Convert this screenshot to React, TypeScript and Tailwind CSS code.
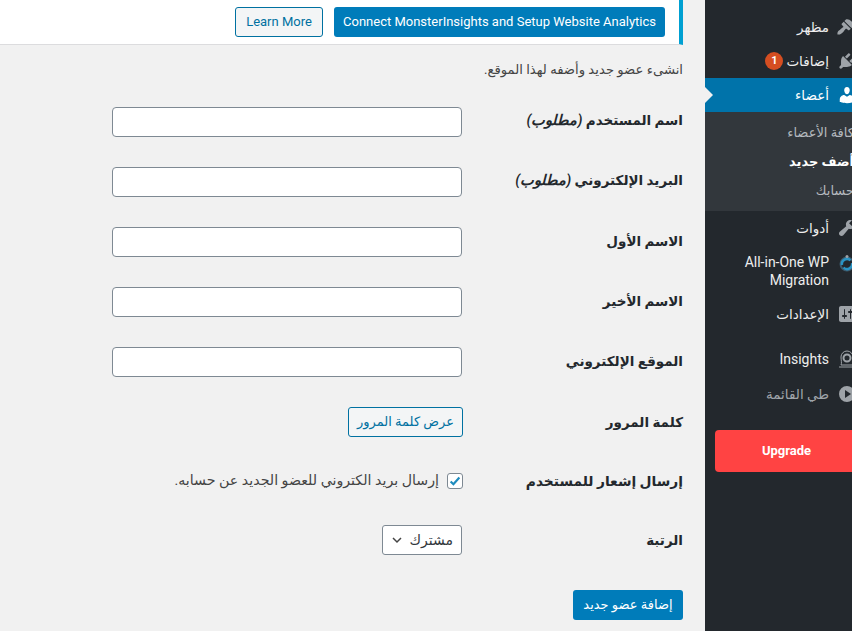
const FONT = "font-['Roboto','Noto_Sans','DejaVu_Sans',sans-serif]";

const Field = ({ label, req }: { label: string; req?: boolean }) => (
  <div className="flex h-[60px] items-center">
    <label className="w-[221px] pb-[2px] text-[13.5px] font-semibold text-[#23282d]">
      {label} {req && <em className="text-[14.5px] font-semibold">(مطلوب)</em>}
    </label>
    <input className="h-[30px] w-[350px] rounded border border-[#7e8993] bg-white" />
  </div>
);

const MenuIcon = ({ d, color }: { d: string; color?: string }) => (
  <svg viewBox="0 0 20 20" className={"h-5 w-5 shrink-0 " + (color || "fill-[#9ea3a8]")}>
    <path fillRule="evenodd" d={d} />
  </svg>
);

const Item = ({ label, icon, cls, children }: { label: string; icon: React.ReactNode; cls?: string; children?: React.ReactNode }) => (
  <div className={"flex items-center " + (cls || "h-[34px] text-[#eeeeee]")}>
    <div className="flex w-[36px] shrink-0 justify-center">{icon}</div>
    <span className="text-[13.5px] leading-[18px]">{label}</span>
    {children}
  </div>
);

const App = () => {
  return (
    <div dir="rtl" className={"flex h-[631px] w-[852px] overflow-hidden bg-[#f1f1f1] " + FONT}>
      <aside className="h-full w-[147px] shrink-0 overflow-hidden bg-[#23282d]">
        <div className="-mr-[13px] w-[160px] pt-[10px]">
          <Item label="مظهر" icon={<MenuIcon d="M14.48 11.06L7.41 3.99l1.5-1.5c.5-.56 2.3-.47 3.51.32 1.21.8 1.43 1.28 2.91 2.1 1.18.64 2.45 1.26 4.45.85zm-.71.71L6.7 4.7 4.93 6.47c-.39.39-.39 1.02 0 1.41l1.06 1.06c.39.39.39 1.03 0 1.42-.6.6-1.43 1.11-2.21 1.69-.35.26-.7.53-1.01.84C1.43 13.23 0 15 .5 17.5c2.5.5 4.27-.93 5.49-2.27.31-.31.58-.66.84-1.01.58-.78 1.09-1.61 1.69-2.21.39-.39 1.03-.39 1.42 0l1.06 1.06c.39.39 1.02.39 1.41 0z" />} />
          <Item label="إضافات" icon={<MenuIcon d="M13.11 4.36L9.87 7.6 8 5.73l3.24-3.24c.35-.34 1.05-.2 1.56.32.52.51.66 1.21.31 1.55zm-8 1.77l.91-1.12 9.01 9.01-1.19.84c-.71.71-2.63 1.16-3.82 1.16H6.14L4.9 17.26c-.59.59-1.54.59-2.12 0-.59-.58-.59-1.53 0-2.12l1.24-1.24v-3.88c0-1.13.4-3.19 1.09-3.89zm7.26 3.97l3.24-3.24c.34-.35 1.04-.21 1.55.31.52.51.66 1.21.32 1.55l-3.24 3.25z" />}>
            <span className="mr-[3px] flex h-[18px] w-[18px] items-center justify-center rounded-full bg-[#d54e21] text-[11px] font-bold text-white">1</span>
          </Item>
          <div className="relative">
            <Item label="أعضاء" cls="h-[34px] bg-[#0073aa] font-medium text-white" icon={<MenuIcon color="fill-white" d="M10 9.25c-2.27 0-2.73-3.44-2.73-3.44C7 4.02 7.82 2 9.97 2c2.16 0 2.98 2.02 2.71 3.81 0 0-.41 3.44-2.68 3.44zm0 2.57L12.72 10c2.39 0 4.52 2.33 4.52 4.53v2.49s-3.65 1.13-7.24 1.13c-3.65 0-7.24-1.13-7.24-1.13v-2.49c0-2.25 1.94-4.48 4.47-4.48z" />} />
            <span className="absolute left-0 top-[9px] h-0 w-0 border-y-[8px] border-l-[8px] border-y-transparent border-l-[#f1f1f1]" />
          </div>
          <div className="h-[99px] bg-[#32373c] pt-[6px] pr-[11px] text-[13px] leading-[29px] text-[#b4b9be]">
            <div className="whitespace-nowrap">كافة الأعضاء</div>
            <div className="whitespace-nowrap font-bold text-white">أضف جديد</div>
            <div className="whitespace-nowrap">حسابك</div>
          </div>
          <Item label="أدوات" icon={<MenuIcon d="M16.68 9.77c-1.34 1.34-3.3 1.67-4.95.99l-5.41 6.52c-.99.99-2.59.99-3.58 0s-.99-2.59 0-3.57l6.52-5.42c-.68-1.65-.35-3.61.99-4.95 1.28-1.28 3.12-1.62 4.72-1.06l-2.89 2.89 2.82 2.82 2.86-2.87c.53 1.58.18 3.39-1.08 4.65z" />} />
          <div className="flex h-[52px] items-start pt-[8px] text-[#eeeeee]">
            <div className="flex w-[36px] shrink-0 justify-center pt-[1px]">
              <svg viewBox="0 0 20 20" className="h-5 w-5 fill-none">
                <circle cx="10" cy="10" r="6.500" className="stroke-[#3d5a6c]" strokeWidth="2" />
                <path d="M5 11a5 5 0 0 1 8.500-4.500M15 9a5 5 0 0 1-8.500 4.500" className="stroke-[#2a94c4]" strokeWidth="2.500" />
                <circle cx="10" cy="2.500" r="1.500" className="fill-[#9ea3a8]" />
              </svg>
            </div>
            <span dir="ltr" className="w-[92px] text-right text-[14px] leading-[18px]">All-in-One WP Migration</span>
          </div>
          <Item label="الإعدادات" icon={<MenuIcon d="M18 16V4c0-1.1-.9-2-2-2H4c-1.1 0-2 .9-2 2v12c0 1.1.9 2 2 2h12c1.100 0 2-.9 2-2zM8 11h1c.55 0 1 .45 1 1s-.45 1-1 1H8v1.500c0 .28-.22.500-.500.500s-.500-.22-.500-.500V13H6c-.55 0-1-.45-1-1s.45-1 1-1h1V5.500c0-.28.22-.500.500-.500s.500.22.500.500V11zm5-2h-1c-.55 0-1-.45-1-1s.45-1 1-1h1V5.500c0-.28.22-.500.500-.500s.500.22.500.500V7h1c.55 0 1 .45 1 1s-.45 1-1 1h-1v5.500c0 .28-.22.500-.500.500s-.500-.22-.500-.500V9z" />} />
          <div className="flex h-[56px] items-center text-[#eeeeee]">
            <div className="flex w-[36px] shrink-0 justify-center">
              <svg viewBox="0 0 20 20" className="h-5 w-5 fill-none stroke-[#9ea3a8]">
                <path d="M4 16c1-2 0-5 0-8a6 6 0 0 1 12 0c0 3-1 6 0 8zM2 18h16" />
                <circle cx="10" cy="9" r="3.500" strokeWidth="2" />
              </svg>
            </div>
            <span dir="ltr" className="text-[14px] leading-[18px]">Insights</span>
          </div>
          <Item label="طي القائمة" cls="-mt-[10px] h-[34px] text-[#a0a5aa]" icon={<MenuIcon d="M10 2a8 8 0 1 1 0 16 8 8 0 0 1 0-16zM8 6v8l6-4z" />} />
          <div className="mx-[10px] mt-[19px] flex h-[42px] items-center justify-center rounded bg-[#ff4343] pl-[3px] text-[13px] font-bold text-white">
            <span dir="ltr">Upgrade</span>
          </div>
        </div>
      </aside>

      <main className="min-w-0 flex-1 pr-[22px]">
        <div className="flex h-[45px] items-center gap-[11px] border-r-4 border-b border-r-[#00a0d2] border-b-[#dcdcde] bg-white pr-[14px]">
          <button dir="ltr" className="h-[30px] w-[331px] rounded-[3px] bg-[#007cba] text-[13px] whitespace-nowrap text-white">
            Connect MonsterInsights and Setup Website Analytics
          </button>
          <button dir="ltr" className="h-[30px] w-[88px] rounded-[3px] border border-[#0071a1] bg-[#f3f5f6] text-[13px] whitespace-nowrap text-[#0071a1]">
            Learn More
          </button>
        </div>
        <p className="mt-[15px] mb-[12px] text-[13.2px] leading-[20px] text-[#444444]">انشىء عضو جديد وأضفه لهذا الموقع.</p>
        <form>
          <Field label="اسم المستخدم" req />
          <Field label="البريد الإلكتروني" req />
          <Field label="الاسم الأول" />
          <Field label="الاسم الأخير" />
          <Field label="الموقع الإلكتروني" />
          <div className="flex h-[60px] items-center">
            <label className="w-[220px] pt-[1px] text-[13.5px] font-semibold text-[#23282d]">كلمة المرور</label>
            <button type="button" className="h-[30px] w-[115px] rounded-[3px] border border-[#0071a1] bg-[#f3f5f6] text-[13px] text-[#0071a1]">عرض كلمة المرور</button>
          </div>
          <div className="flex h-[58px] items-center">
            <label className="w-[220px] text-[13.8px] font-semibold text-[#23282d]">إرسال إشعار للمستخدم</label>
            <span className="flex h-4 w-4 items-center justify-center rounded-[3px] border border-[#7e8993] bg-white">
              <svg viewBox="0 0 16 16" className="h-[14px] w-[14px] fill-none stroke-[#1e8cbe] stroke-[2.500]"><path d="M3 8.500l3.200 3.200L13 4" /></svg>
            </span>
            <span className="mr-[8px] text-[14.2px] text-[#444444]">إرسال بريد الكتروني للعضو الجديد عن حسابه.</span>
          </div>
          <div className="flex h-[60px] items-center">
            <label className="w-[221px] text-[13.5px] font-semibold text-[#23282d]">الرتبة</label>
            <div className="flex h-[30px] w-[80px] items-center justify-between rounded-[3px] border border-[#7e8993] bg-white pr-[8px] pl-[6px] text-[14px] text-[#32373c]">
              <span>مشترك</span>
              <svg viewBox="0 0 16 16" className="h-4 w-4 fill-none stroke-[#444444] stroke-[1.500]"><path d="M4 6l4 4 4-4" /></svg>
            </div>
          </div>
          <button type="button" className="mt-[20px] h-[30px] w-[110px] rounded-[3px] bg-[#007cba] text-[13px] text-white">إضافة عضو جديد</button>
        </form>
      </main>
    </div>
  );
};

export default App;
